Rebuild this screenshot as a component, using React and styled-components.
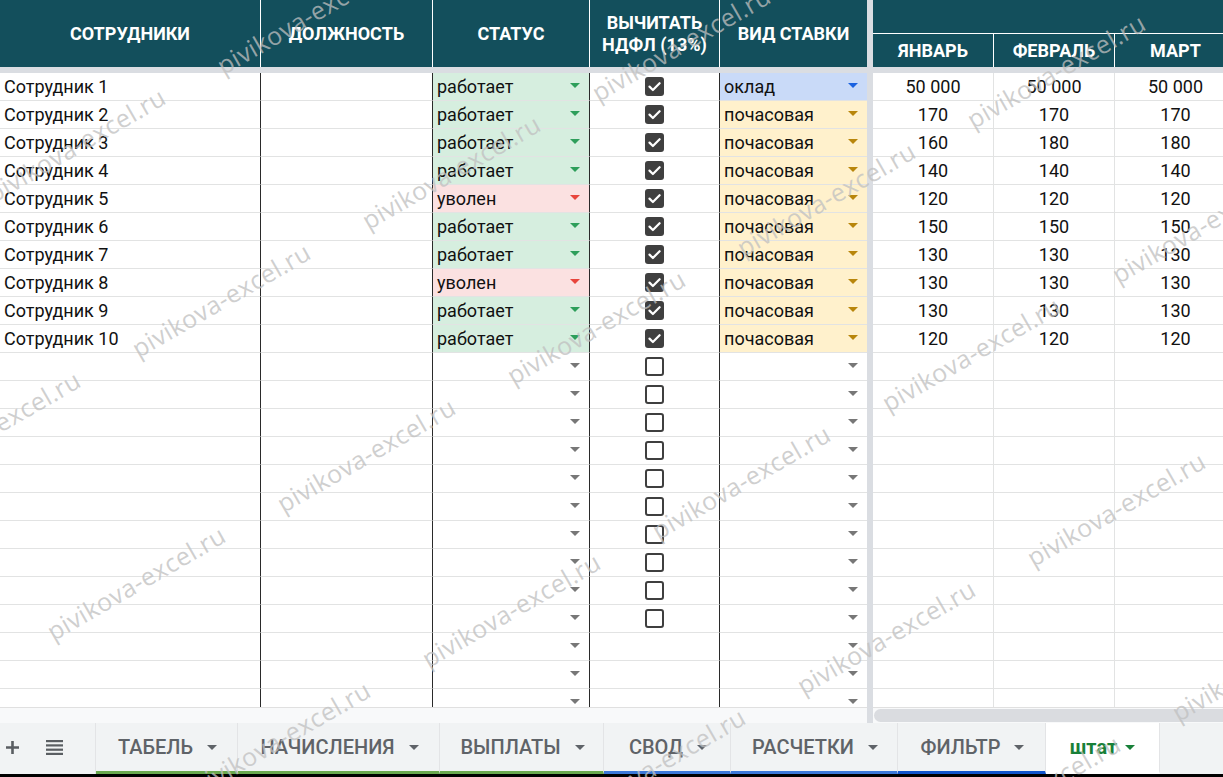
import React from 'react';
import styled, { createGlobalStyle } from 'styled-components';

const GlobalStyle = createGlobalStyle`
  html, body { margin: 0; padding: 0; background: #fff; overflow: hidden; }
  * { box-sizing: border-box; }
  body { font-family: Roboto, "Liberation Sans", Arial, sans-serif; }
`;

const Page = styled.div`
  position: relative;
  width: 1223px;
  height: 777px;
  display: flex;
  flex-direction: column;
  overflow: hidden;
  background: #fff;
`;

const Sheet = styled.div`
  display: flex;
  height: 707px;
  flex: none;
`;

const Pane = styled.div`
  display: flex;
  flex-direction: column;
  width: ${p => p.$w}px;
  flex: none;
  overflow: hidden;
`;

const Divider = styled.div`
  width: 6px;
  flex: none;
  background: #dadde2;
`;

const HeaderRow = styled.div`
  display: flex;
  height: 67px;
  flex: none;
  background: #134f5c;
`;

const HeadCell = styled.div`
  width: ${p => p.$w}px;
  flex: none;
  display: flex;
  align-items: center;
  justify-content: center;
  text-align: center;
  color: #fff;
  font-weight: 700;
  font-size: 18px;
  line-height: 22px;
  text-transform: uppercase;
  white-space: nowrap;
  border-right: ${p => (p.$last ? 'none' : '1px solid #fff')};
`;

const MonthHeader = styled.div`
  display: flex;
  flex-direction: column;
  width: 363px;
  flex: none;
`;

const MergedTop = styled.div`
  height: 34px;
  border-bottom: 1px solid #fff;
`;

const MonthRow = styled.div`
  display: flex;
  height: 33px;
`;

const FreezeBar = styled.div`
  height: 6px;
  flex: none;
  background: #dadde2;
`;

const Body = styled.div`
  flex: 1;
  overflow: hidden;
`;

const Row = styled.div`
  display: flex;
  height: 28px;
`;

const Cell = styled.div`
  width: ${p => p.$w}px;
  flex: none;
  height: 28px;
  display: flex;
  align-items: center;
  justify-content: ${p => p.$align || 'space-between'};
  padding: 0 ${p => (p.$align === 'center' ? '0' : '4px')};
  font-size: 18px;
  color: #111;
  white-space: nowrap;
  overflow: hidden;
  background: ${p => p.$bg || '#fff'};
  border-bottom: 1px solid #e2e3e3;
  border-right: ${p => (p.$edge === 'dark' ? '1px solid #2a2a2a' : p.$edge === 'light' ? '1px solid #e2e3e3' : 'none')};
`;

const Arrow = styled.span`
  width: 0;
  height: 0;
  flex: none;
  margin-right: 5px;
  margin-top: -2px;
  border-left: 5px solid transparent;
  border-right: 5px solid transparent;
  border-top: 5px solid ${p => p.$c};
`;

const Box = styled.span`
  width: 19px;
  height: 19px;
  border-radius: 3px;
  display: flex;
  align-items: center;
  justify-content: center;
  background: ${p => (p.$on ? '#3f3f3f' : '#fff')};
  border: ${p => (p.$on ? 'none' : '2px solid #3f3f3f')};
`;

const Strip = styled.div`
  display: flex;
  height: 16px;
  flex: none;
`;

const StripLeft = styled.div`
  width: 867px;
  flex: none;
  background: #f8f9fa;
  border-top: 1px solid #e0e0e0;
`;

const StripRight = styled.div`
  flex: 1;
  background: #f8f9fa;
  border-top: 1px solid #e0e0e0;
  padding: 1px 0 1px 1px;
  display: flex;
`;

const Thumb = styled.div`
  flex: 1;
  margin-right: -20px;
  border-radius: 7px;
  background: #dadce0;
`;

const TabBar = styled.div`
  display: flex;
  height: 51px;
  flex: none;
  background: #f1f3f4;
`;

const Controls = styled.div`
  width: 96px;
  flex: none;
  display: flex;
  align-items: center;
  padding: 0 0 3px 5px;
  gap: 26px;
  border-right: 1px solid #e3e4e6;
`;

const Tab = styled.div`
  width: ${p => p.$w}px;
  flex: none;
  display: flex;
  align-items: center;
  justify-content: center;
  gap: ${p => (p.$active ? '8px' : '14px')};
  padding-left: ${p => (p.$active ? '0' : '2px')};
  border-right: 1px solid #e3e4e6;
  border-bottom: 3px solid ${p => p.$line};
  background: ${p => (p.$active ? '#fff' : 'transparent')};
  color: ${p => (p.$active ? '#188038' : '#5f6368')};
  font-size: 20px;
  font-weight: ${p => (p.$active ? 700 : 500)};
  white-space: nowrap;
`;

const TabArrow = styled.span`
  width: 0;
  height: 0;
  margin-top: 1px;
  border-left: 5px solid transparent;
  border-right: 5px solid transparent;
  border-top: 5px solid ${p => p.$c};
`;

const BottomEdge = styled.div`
  height: 3px;
  flex: none;
  background: #000;
`;

const Watermarks = styled.div`
  position: absolute;
  inset: 0;
  pointer-events: none;
  overflow: hidden;
`;

const Mark = styled.span`
  position: absolute;
  font-family: "Open Sans", "DejaVu Sans", sans-serif;
  font-size: 25px;
  line-height: 25px;
  letter-spacing: 0.4px;
  white-space: nowrap;
  color: rgba(192, 192, 192, 0.75);
  transform-origin: 0 100%;
  transform: rotate(-30deg);
`;

const frozenCols = [261, 172, 157, 130, 147];
const monthW = 121;

const statusStyle = {
  'работает': { bg: '#d6eedf', c: '#2e9e5b' },
  'уволен': { bg: '#fbe1e1', c: '#e8453c' },
};
const rateStyle = {
  'оклад': { bg: '#c9daf8', c: '#1a62e0' },
  'почасовая': { bg: '#fff1cc', c: '#b8860b' },
};

const data = [
  ['Сотрудник 1', 'работает', 'оклад', ['50 000', '50 000', '50 000']],
  ['Сотрудник 2', 'работает', 'почасовая', ['170', '170', '170']],
  ['Сотрудник 3', 'работает', 'почасовая', ['160', '180', '180']],
  ['Сотрудник 4', 'работает', 'почасовая', ['140', '140', '140']],
  ['Сотрудник 5', 'уволен', 'почасовая', ['120', '120', '120']],
  ['Сотрудник 6', 'работает', 'почасовая', ['150', '150', '150']],
  ['Сотрудник 7', 'работает', 'почасовая', ['130', '130', '130']],
  ['Сотрудник 8', 'уволен', 'почасовая', ['130', '130', '130']],
  ['Сотрудник 9', 'работает', 'почасовая', ['130', '130', '130']],
  ['Сотрудник 10', 'работает', 'почасовая', ['120', '120', '120']],
];

const TOTAL_ROWS = 23;
const rows = Array.from({ length: TOTAL_ROWS }, (_, i) => {
  if (i < data.length) {
    const [name, status, rate, vals] = data[i];
    return { name, status, rate, vals, box: 'on' };
  }
  return { name: '', status: '', rate: '', vals: ['', '', ''], box: i < 20 ? 'off' : 'none' };
});

const tabs = [
  { label: 'ТАБЕЛЬ', w: 142, line: '#6aa84f' },
  { label: 'НАЧИСЛЕНИЯ', w: 202, line: '#6aa84f' },
  { label: 'ВЫПЛАТЫ', w: 164, line: '#6aa84f' },
  { label: 'СВОД', w: 127, line: '#3c78d8' },
  { label: 'РАСЧЕТКИ', w: 167, line: '#3c78d8' },
  { label: 'ФИЛЬТР', w: 148, line: '#1155cc' },
  { label: 'штат', w: 114, line: 'transparent', active: true },
];

const marks = [];
for (let i = -3; i <= 2; i++) {
  for (let j = -1; j <= 6; j++) {
    const x = 225 + i * 375 + j * 145;
    const y = 78 + i * 27 + j * 155;
    if (x > -240 && x < 1223 && y > 0 && y < 900) marks.push([x, y]);
  }
}

const Check = () => (
  <svg width="13" height="11" viewBox="0 0 13 11">
    <path d="M1.5 5.6 L4.9 9 L11.6 2.2" fill="none" stroke="#fff" strokeWidth="2.2" strokeLinecap="round" strokeLinejoin="round" />
  </svg>
);

const PlusIcon = () => (
  <svg width="15" height="15" viewBox="0 0 15 15">
    <path d="M7.5 1 V14 M1 7.5 H14" stroke="#5a5e62" strokeWidth="2.6" />
  </svg>
);

const ListIcon = () => (
  <svg width="17" height="16" viewBox="0 0 17 16">
    <rect x="0" y="1" width="17" height="2.2" fill="#5a5e62" />
    <rect x="0" y="5.3" width="17" height="2.2" fill="#5a5e62" />
    <rect x="0" y="9.6" width="17" height="2.2" fill="#5a5e62" />
    <rect x="0" y="13.8" width="17" height="2.2" fill="#5a5e62" />
  </svg>
);

export default function App() {
  return (
    <Page>
      <GlobalStyle />
      <Sheet>
        <Pane $w={867}>
          <HeaderRow>
            <HeadCell $w={frozenCols[0]}>Сотрудники</HeadCell>
            <HeadCell $w={frozenCols[1]}>Должность</HeadCell>
            <HeadCell $w={frozenCols[2]}>Статус</HeadCell>
            <HeadCell $w={frozenCols[3]}>Вычитать<br />НДФЛ (13%)</HeadCell>
            <HeadCell $w={frozenCols[4]} $last>Вид ставки</HeadCell>
          </HeaderRow>
          <FreezeBar />
          <Body>
            {rows.map((r, i) => {
              const s = statusStyle[r.status];
              const rt = rateStyle[r.rate];
              return (
                <Row key={i}>
                  <Cell $w={frozenCols[0]} $edge="dark">{r.name}</Cell>
                  <Cell $w={frozenCols[1]} $edge="dark" />
                  <Cell $w={frozenCols[2]} $edge="dark" $bg={s && s.bg}>
                    <span>{r.status}</span>
                    <Arrow $c={s ? s.c : '#777'} />
                  </Cell>
                  <Cell $w={frozenCols[3]} $edge="dark" $align="center">
                    {r.box !== 'none' && (
                      <Box $on={r.box === 'on'}>{r.box === 'on' && <Check />}</Box>
                    )}
                  </Cell>
                  <Cell $w={frozenCols[4]} $bg={rt && rt.bg}>
                    <span>{r.rate}</span>
                    <Arrow $c={rt ? rt.c : '#777'} />
                  </Cell>
                </Row>
              );
            })}
          </Body>
        </Pane>
        <Divider />
        <Pane $w={350}>
          <HeaderRow>
            <MonthHeader>
              <MergedTop />
              <MonthRow>
                <HeadCell $w={monthW}>Январь</HeadCell>
                <HeadCell $w={monthW}>Февраль</HeadCell>
                <HeadCell $w={monthW} $last>Март</HeadCell>
              </MonthRow>
            </MonthHeader>
          </HeaderRow>
          <FreezeBar />
          <Body>
            {rows.map((r, i) => (
              <Row key={i}>
                {r.vals.map((v, k) => (
                  <Cell key={k} $w={monthW} $edge={k < 2 ? 'light' : 'none'} $align="center">{v}</Cell>
                ))}
              </Row>
            ))}
          </Body>
        </Pane>
      </Sheet>
      <Strip>
        <StripLeft />
        <Divider />
        <StripRight><Thumb /></StripRight>
      </Strip>
      <TabBar>
        <Controls>
          <PlusIcon />
          <ListIcon />
        </Controls>
        {tabs.map(t => (
          <Tab key={t.label} $w={t.w} $line={t.line} $active={t.active}>
            <span>{t.label}</span>
            <TabArrow $c={t.active ? '#188038' : '#5f6368'} />
          </Tab>
        ))}
      </TabBar>
      <BottomEdge />
      <Watermarks>
        {marks.map(([x, y], k) => (
          <Mark key={k} style={{ left: x, top: y - 25 }}>pivikova-excel.ru</Mark>
        ))}
      </Watermarks>
    </Page>
  );
}
